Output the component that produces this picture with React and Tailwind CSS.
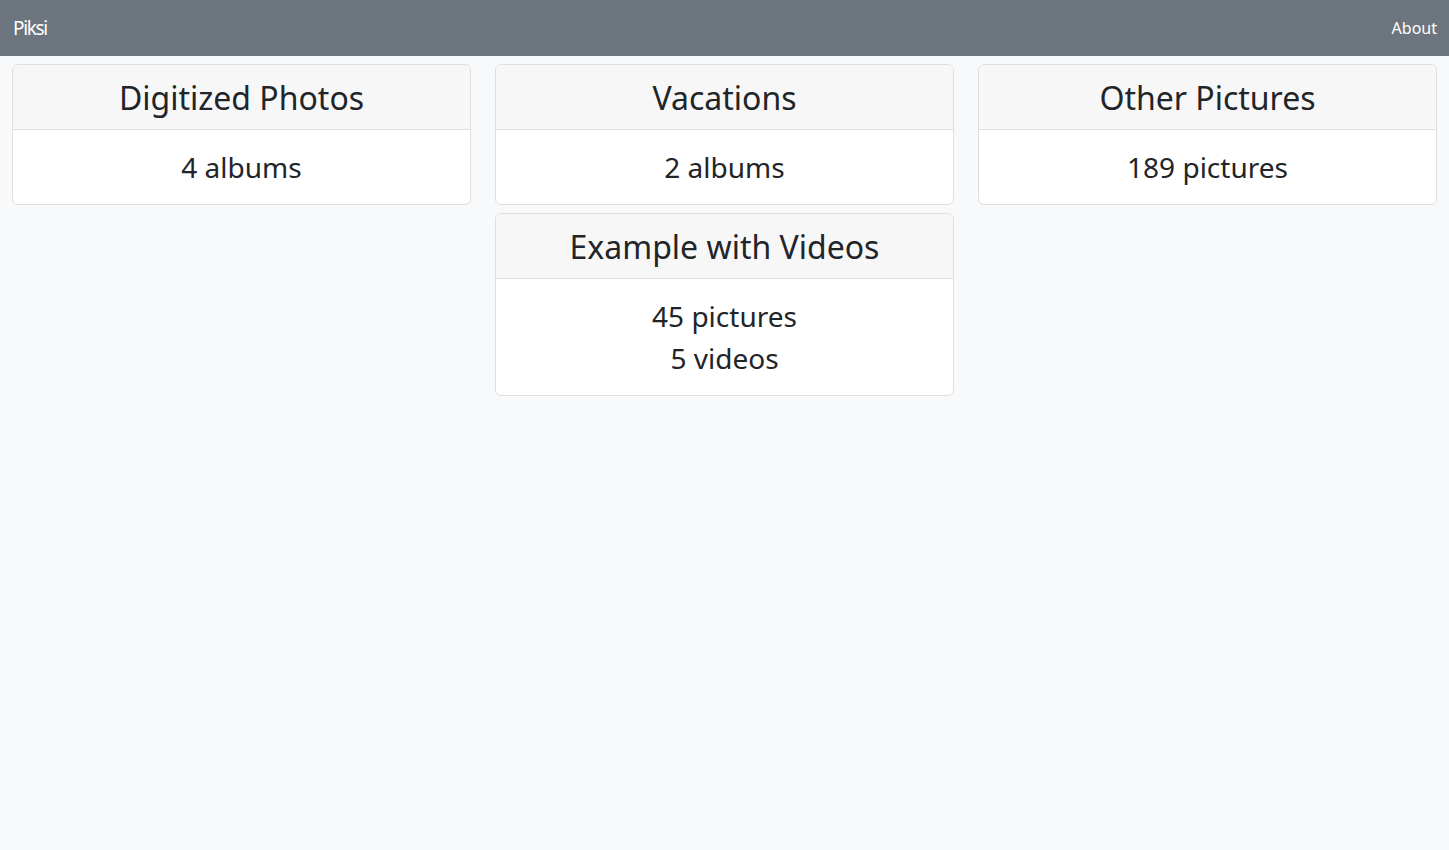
const columns = [
  [{ title: 'Digitized Photos', lines: ['4 albums'] }],
  [
    { title: 'Vacations', lines: ['2 albums'] },
    { title: 'Example with Videos', lines: ['45 pictures', '5 videos'] }
  ],
  [{ title: 'Other Pictures', lines: ['189 pictures'] }]
];

function AlbumCard({ title, lines }) {
  return (
    <div className="bg-white border border-[#dfdfdf] rounded-[6px] overflow-hidden text-center text-[#212529]">
      <div className="bg-[#f7f7f7] border-b border-[#dfdfdf] px-4 pt-[9px] pb-[7px]">
        <h2 className="text-[32px] leading-[48px]">{title}</h2>
      </div>
      <div className="px-4 py-4 text-[28px] leading-[42px]">
        {lines.map((line) => (
          <div key={line}>{line}</div>
        ))}
      </div>
    </div>
  );
}

export default function App() {
  return (
    <div className="min-h-[850px] bg-[#f8f9fa] font-['Noto_Sans',sans-serif]">
      {/* Navbar */}
      <nav className="h-14 bg-[#6c757d] flex items-center justify-between pl-[13px] pr-3 text-white">
        <span className="text-[19px] tracking-[-0.07em]">Piksi</span>
        <span className="text-base">About</span>
      </nav>

      {/* Albums */}
      <div className="grid grid-cols-3 gap-x-6 px-3 pt-2">
        {columns.map((col, i) => (
          <div key={i} className="flex flex-col gap-2">
            {col.map((card) => (
              <AlbumCard key={card.title} {...card} />
            ))}
          </div>
        ))}
      </div>
    </div>
  );
}
